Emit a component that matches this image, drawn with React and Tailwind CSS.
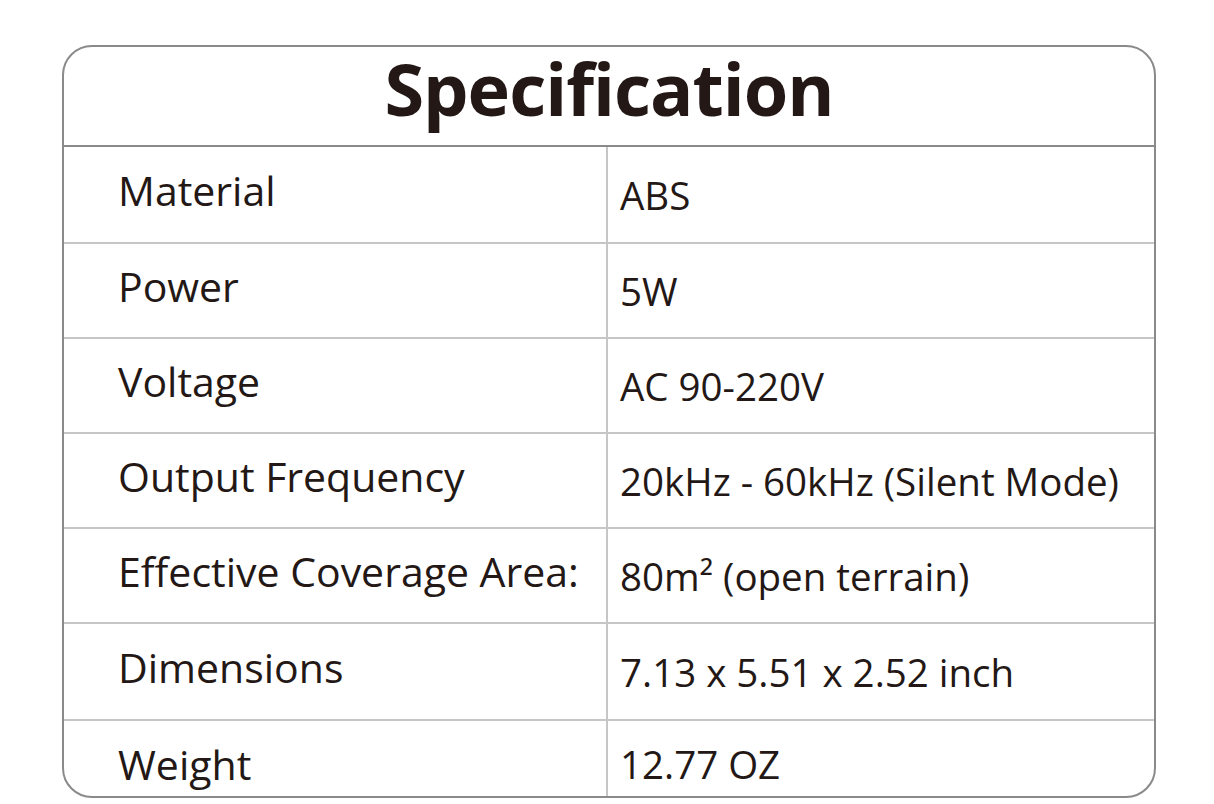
const specs = [
  { label: 'Material', value: 'ABS', h: 'h-[95px]' },
  { label: 'Power', value: '5W', h: 'h-[95px]' },
  { label: 'Voltage', value: 'AC 90-220V', h: 'h-[95px]' },
  { label: 'Output Frequency', value: '20kHz - 60kHz (Silent Mode)', h: 'h-[95px]' },
  { label: 'Effective Coverage Area:', value: '80m² (open terrain)', h: 'h-[95px]' },
  { label: 'Dimensions', value: '7.13 x 5.51 x 2.52 inch', h: 'h-[97px]' },
];

export default function App() {
  return (
    <div className="min-h-screen bg-white pt-[45px] pl-[62px] font-['Open_Sans',sans-serif] text-[#231815]">
      <div className="w-[1094px] border-2 border-[#8a8a8a] rounded-[30px]">
        {/* Title */}
        <div className="h-[100px] flex items-start justify-center pt-[1px] border-b-2 border-[#8a8a8a]">
          <h1 className="text-[72px] font-bold tracking-[-1px] leading-[80px]">Specification</h1>
        </div>

        {specs.map((row, idx) => (
          <div
            key={row.label}
            className={`flex ${row.h} ${idx > 0 ? 'border-t-2 border-[#c6c6c6]' : ''}`}
          >
            <div className="w-[544px] shrink-0 flex items-center pl-[54px] pb-[8px] border-r-2 border-[#c6c6c6] text-[41px] leading-[1.2]">
              {row.label}
            </div>
            <div className="flex-1 flex items-center pl-[12px] pt-[2px] text-[38.5px] leading-[1.2]">
              {row.value}
            </div>
          </div>
        ))}

        {/* last row sits lower, cut by the rounded frame */}
        <div className="flex h-[77px] border-t-2 border-[#c6c6c6]">
          <div className="w-[544px] shrink-0 flex items-center pl-[54px] pt-[12px] border-r-2 border-[#c6c6c6] text-[41px] leading-[1.2]">
            Weight
          </div>
          <div className="flex-1 flex items-center pl-[12px] pt-[12px] text-[38.5px] leading-[1.2]">
            12.77 OZ
          </div>
        </div>
      </div>
    </div>
  );
}
